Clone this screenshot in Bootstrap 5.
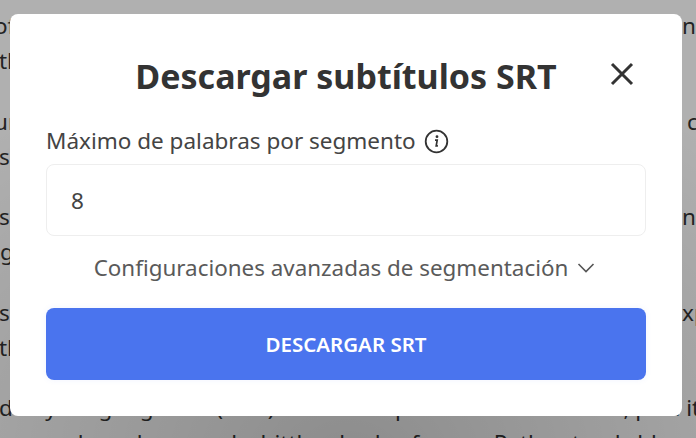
<!DOCTYPE html>
<html lang="es"><head><meta charset="utf-8">
<link href="https://cdn.jsdelivr.net/npm/bootstrap@5.3.0/dist/css/bootstrap.min.css" rel="stylesheet">
<style>
html,body{height:100%;margin:0;overflow:hidden}
body{font-family:"Noto Sans","Open Sans",sans-serif;background:#fff;position:relative;width:696px;height:438px}
.page-behind{height:438px;overflow:hidden;color:#333;font-size:22.5px;line-height:35px;padding-top:8px}
.bg-row{display:grid;grid-template-columns:682px 1fr;white-space:nowrap;height:35px}
.bg-para{margin-bottom:25.5px}
.off-a{margin-left:-6px}
.off-b{margin-left:-1px}
.off-c{padding-left:5px}
.bg-full{white-space:nowrap;height:35px;margin-left:-1px}
.bg-tail{padding-left:68px}
.scrim{position:absolute;inset:0;background:radial-gradient(ellipse 560px 420px at 50% 105%,rgba(0,0,0,.45),rgba(0,0,0,.31))}
.dialog{position:absolute;left:10px;top:14px;width:672px;height:402px;background:#fff;border-radius:8px;padding:0 36px;color:#333}
.dlg-head{height:108px;padding-top:40px}
.dlg-title{font-size:34px;font-weight:700;line-height:44px;color:#333;margin:0;text-align:center}
.dlg-x{position:absolute;left:600px;top:48px;line-height:0;background:none;border:0;padding:0}
.dlg-label{font-size:22.5px;color:#444;margin:0;height:42px;padding-bottom:4px}
.dlg-input{height:72px;border:1px solid #eee;border-radius:8px;font-size:22.5px;color:#444;padding:0 24px;box-shadow:none}
.dlg-adv{color:#5a5a5a;font-size:22.4px;height:72px;padding:0 3px 8px 0;gap:9px}
.dlg-btn{background:#4a74ee;border:0;border-radius:8px;height:72px;color:#fff;font-size:20.5px;font-weight:600;box-shadow:0 0 6px rgba(74,116,238,.08)}
</style></head><body>
<div class="page-behind">
<div class="bg-para">
<div class="bg-row"><span class="off-a">of</span><span>nk</span></div>
<div class="bg-row"><span class="off-b">th</span><span></span></div>
</div>
<div class="bg-para">
<div class="bg-row"><span class="off-a">ur</span><span class="off-c">c</span></div>
<div class="bg-row"><span class="off-b">s</span><span></span></div>
</div>
<div class="bg-para">
<div class="bg-row"><span class="off-b">si</span><span>ni</span></div>
<div class="bg-row"><span>g</span><span></span></div>
</div>
<div class="bg-para">
<div class="bg-row"><span class="off-b">s</span><span>xp</span></div>
<div class="bg-row"><span class="off-b">tl</span><span></span></div>
</div>
<div class="bg-para">
<div class="bg-full">d anything together (1:30). You could press R onto a canvas, peel it</div>
<div class="bg-full bg-tail">shape here, and whittle a body of roses. Path extends bl</div>
</div>
</div>
<div class="scrim"></div>
<div class="dialog">
<div class="dlg-head"><h2 class="dlg-title">Descargar subtítulos SRT</h2></div>
<button class="dlg-x" aria-label="Cerrar"><svg width="24" height="24" viewBox="0 0 24 24"><path d="M2 2L22 22M22 2L2 22" stroke="#333" stroke-width="3" fill="none"/></svg></button>
<label class="dlg-label d-flex align-items-center gap-2">Máximo de palabras por segmento
<svg width="25" height="25" viewBox="0 0 25 25" fill="none"><circle cx="12.5" cy="12.5" r="10.8" stroke="#333" stroke-width="1.8"/><circle cx="13" cy="7.7" r="1.4" fill="#333"/><path d="M11 11.2h2.2l-1 5.6h1.7" stroke="#333" stroke-width="1.7"/></svg></label>
<input class="form-control dlg-input" value="8">
<div class="dlg-adv d-flex align-items-center justify-content-center">Configuraciones avanzadas de segmentación
<svg width="18" height="12" viewBox="0 0 18 12" fill="none"><path d="M1.5 2L9 9.5L16.5 2" stroke="#555" stroke-width="1.6"/></svg></div>
<button class="btn dlg-btn w-100">DESCARGAR SRT</button>
</div>
<script src="https://cdn.jsdelivr.net/npm/bootstrap@5.3.0/dist/js/bootstrap.bundle.min.js"></script>
</body></html>
